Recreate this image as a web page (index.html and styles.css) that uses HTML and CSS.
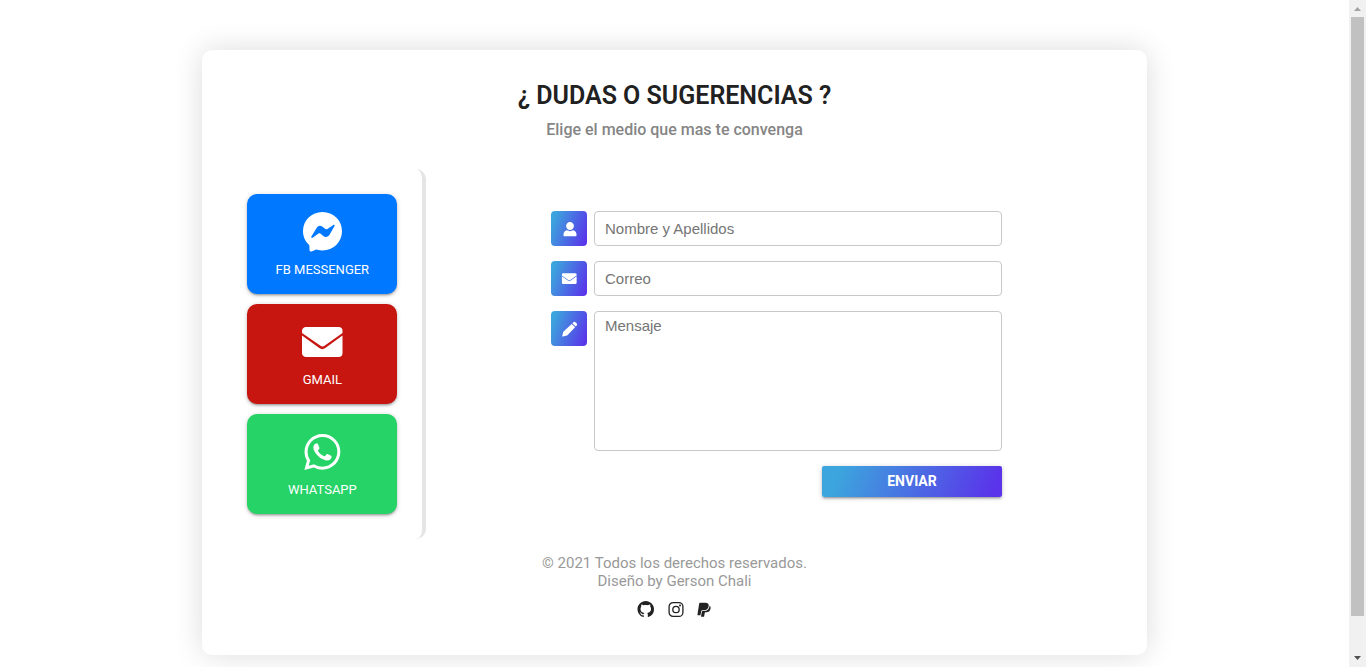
FILE: index.html
```html
<!DOCTYPE html>
<html lang="es">
<head>
<meta charset="utf-8">
<meta name="viewport" content="width=device-width, initial-scale=1">
<title>Dudas o sugerencias</title>
<link rel="stylesheet" href="styles.css">
</head>
<body>
<div class="page">
  <main class="content">
    <section class="card">
      <header class="heading">
        <h1 class="title">¿ DUDAS O SUGERENCIAS ?</h1>
        <p class="subtitle">Elige el medio que mas te convenga</p>
      </header>
      <div class="columns">
        <nav class="channels">
          <a class="channel messenger" href="#messenger">
            <svg class="channel-icon" viewBox="-1 0 42 42" aria-hidden="true"><path fill="currentColor" fill-rule="evenodd" d="M20.500 1C9.600 1 1 9.300 1 20.200c0 5.600 2.400 10.200 5.700 13.300.5.500.7 1 .7 1.600l.1 4c0 1.100 1 1.800 2 1.400l4.200-1.800c.6-.2 1-.2 1.600 0 1.600.5 3.300.7 5.200.7C31.400 39.400 40 31.100 40 20.200S31.400 1 20.500 1zM9.400 25.600l4.900-8.200c1.500-2.600 3.700-3.500 6.200-1.700l2.900 2.200c.7.600 1.400.5 2 .1l5.900-4c.9-.6 1.700.1 1.200 1.100l-4.700 8.100c-1.600 2.800-4.200 3.500-6.500 1.700l-3-2.300c-.6-.4-1.200-.4-1.800 0l-5.900 4.100c-.9.600-1.700-.2-1.200-1.100z"/></svg>
            <span>FB MESSENGER</span>
          </a>
          <a class="channel gmail" href="#gmail">
            <svg class="channel-icon" viewBox="-0.500 0 42 42" aria-hidden="true"><path fill="currentColor" d="M5 6h32a4 4 0 0 1 4 4v2L23 24.700a3.500 3.500 0 0 1-4 0L.5 12V10A4 4 0 0 1 5 6zM.5 14.600 17.800 27a5 5 0 0 0 6 0L41 14.600V32a4 4 0 0 1-4 4H5a4 4 0 0 1-4.500-4z"/></svg>
            <span>GMAIL</span>
          </a>
          <a class="channel whatsapp" href="#whatsapp">
            <svg class="channel-icon" viewBox="-1.500 -1.300 18.600 18.600" aria-hidden="true"><path fill="currentColor" d="M13.601 2.326A7.854 7.854 0 0 0 7.994 0C3.627 0 .068 3.558.064 7.926c0 1.399.366 2.760 1.057 3.965L0 16l4.204-1.102a7.933 7.933 0 0 0 3.790.965h.004c4.368 0 7.926-3.558 7.930-7.930A7.898 7.898 0 0 0 13.600 2.326zM7.994 14.521a6.573 6.573 0 0 1-3.356-.920l-.240-.144-2.494.654.666-2.433-.156-.251a6.560 6.560 0 0 1-1.007-3.505c0-3.626 2.957-6.584 6.591-6.584a6.560 6.560 0 0 1 4.660 1.931 6.557 6.557 0 0 1 1.928 4.660c-.004 3.639-2.961 6.592-6.592 6.592zm3.615-4.934c-.197-.099-1.170-.578-1.353-.646-.182-.065-.315-.099-.445.099-.133.197-.513.646-.627.775-.114.133-.232.148-.430.050-.197-.100-.836-.308-1.592-.985-.590-.525-.985-1.175-1.103-1.372-.114-.198-.011-.304.088-.403.087-.088.197-.232.296-.346.100-.114.133-.198.198-.330.065-.134.034-.248-.015-.347-.050-.099-.445-1.076-.612-1.470-.160-.389-.323-.335-.445-.340-.114-.007-.247-.007-.380-.007a.729.729 0 0 0-.529.247c-.182.198-.691.677-.691 1.654 0 .977.710 1.916.810 2.049.098.133 1.394 2.132 3.383 2.992.470.205.840.326 1.129.418.475.152.904.129 1.246.080.380-.058 1.171-.480 1.338-.943.164-.464.164-.860.114-.943-.049-.084-.182-.133-.380-.232z"/></svg>
            <span>WHATSAPP</span>
          </a>
        </nav>
        <div class="form-area">
          <form class="form">
            <div class="field">
              <label class="field-icon" for="nombre" aria-label="Nombre y Apellidos">
                <svg viewBox="-1 0 16 16" aria-hidden="true"><path fill="currentColor" d="M8 1a3.900 3.900 0 0 1 3.900 4C11.900 7 10.200 9 8 9S4.100 7 4.100 5A3.900 3.900 0 0 1 8 1zM5 9.300c1.800 1.100 4.200 1.100 6 0 2.200.5 3.500 2.100 3.500 4.200v.8c0 .6-.4 1-1 1h-11c-.6 0-1-.4-1-1v-.8c0-2.100 1.300-3.700 3.500-4.200z"/></svg>
              </label>
              <input class="control" id="nombre" type="text" placeholder="Nombre y Apellidos">
            </div>
            <div class="field">
              <label class="field-icon" for="correo" aria-label="Correo">
                <svg viewBox="-2 0 44 44" aria-hidden="true"><path fill="currentColor" d="M5 6h32a4 4 0 0 1 4 4v2.200L22.500 25.300a3 3 0 0 1-3.500 0L.5 12.200V10A4 4 0 0 1 5 6zM.5 14.600 17.800 27a5 5 0 0 0 6 0L41 14.600V32a4 4 0 0 1-4 4H5a4 4 0 0 1-4.500-4z"/></svg>
              </label>
              <input class="control" id="correo" type="email" placeholder="Correo">
            </div>
            <div class="field">
              <label class="field-icon" for="mensaje" aria-label="Mensaje">
                <svg viewBox="-1 0 16 16" aria-hidden="true"><path fill="currentColor" d="M11.200 1.400a1.800 1.800 0 0 1 2.500 0l.8.800a1.800 1.800 0 0 1 0 2.500l-.8.900-3.400-3.400zM9.700 2.900l3.400 3.400-7.700 7.900c-.2.200-.4.300-.6.400L1 15.500c-.5.100-.8-.2-.7-.7l.9-3.700c.1-.2.200-.4.400-.6z"/></svg>
              </label>
              <textarea class="control message" id="mensaje" placeholder="Mensaje"></textarea>
            </div>
            <button class="submit" type="submit">ENVIAR</button>
          </form>
        </div>
      </div>
      <footer class="footer">
        <p class="legal">© 2021 Todos los derechos reservados.<br>Diseño by Gerson Chali</p>
        <div class="social">
          <a href="#github" aria-label="GitHub"><svg viewBox="-0.500 0 16.500 16.500" aria-hidden="true"><path fill="currentColor" d="M8 0C3.580 0 0 3.580 0 8c0 3.540 2.290 6.530 5.470 7.590.400.070.550-.170.550-.380 0-.190-.010-.820-.010-1.490-2.010.370-2.530-.490-2.690-.940-.090-.230-.480-.940-.820-1.130-.280-.150-.680-.520-.010-.530.630-.010 1.080.580 1.230.820.720 1.210 1.870.870 2.330.660.070-.520.280-.870.510-1.070-1.780-.200-3.640-.890-3.640-3.950 0-.870.310-1.590.820-2.150-.080-.200-.360-1.020.080-2.120 0 0 .670-.210 2.200.820.640-.180 1.320-.270 2-.270s1.360.090 2 .270c1.530-1.040 2.200-.820 2.200-.820.440 1.100.160 1.920.080 2.120.510.560.820 1.270.820 2.150 0 3.070-1.870 3.750-3.650 3.950.290.250.540.730.540 1.480 0 1.070-.010 1.930-.010 2.200 0 .210.150.460.550.380A8.010 8.010 0 0 0 16 8c0-4.420-3.580-8-8-8z"/></svg></a>
          <a href="#instagram" aria-label="Instagram"><svg viewBox="-0.500 0 17 17" aria-hidden="true"><g fill="none" stroke="currentColor" stroke-width="1.300"><rect x="1.600" y="1.600" width="13.800" height="13.800" rx="4"/><circle cx="8.500" cy="8.500" r="3.200"/></g><circle cx="12.500" cy="4.500" r="1" fill="currentColor"/></svg></a>
          <a class="paypal" href="#paypal" aria-label="PayPal"><svg viewBox="1 0 15 17" aria-hidden="true"><path fill="currentColor" d="M4.200 1.200h5.600c2.800 0 4.200 1.400 3.700 3.900-.5 2.800-2.300 4.200-5.200 4.200H6.500c-.6 0-.9.300-1 .8l-.8 4.500H2c-.4 0-.6-.2-.5-.6L3.400 1.900c.1-.4.4-.7.8-.7z"/><path fill="currentColor" d="M14.500 4.500c1 .8 1.300 1.900 1 3.200-.5 2.600-2.100 3.700-4.600 3.700h-.8c-.5 0-.7.200-.8.700l-.6 3.600c-.1.400-.3.600-.7.600H5.700c-.3 0-.5-.2-.4-.5l.9-5c.1-.4.300-.6.700-.6h1.500c3.600 0 5.800-1.800 6.100-5.700z"/></svg></a>
        </div>
      </footer>
    </section>
  </main>
  <div class="scrollbar" aria-hidden="true">
    <svg class="arrow up" viewBox="0 0 17 17"><path fill="currentColor" d="M5 11 8.500 7 12 11z"/></svg>
    <div class="track"><div class="thumb"></div></div>
    <svg class="arrow" viewBox="0 0 17 17"><path fill="currentColor" d="M5 6h7L8.500 10z"/></svg>
  </div>
</div>
</body>
</html>
```

FILE: styles.css
```css
* {
  box-sizing: border-box;
}

html {
  scrollbar-width: none;
}

body {
  margin: 0;
  background: #fff;
  color: #212121;
  font-family: Roboto, "Liberation Sans", sans-serif;
}

h1,
p {
  margin: 0;
}

.page {
  display: flex;
  height: 100vh;
  overflow: hidden;
}

.content {
  flex: 1;
  min-width: 0;
  padding: 50px 0;
}

.card {
  width: 70%;
  margin: 0 auto;
  padding: 31px 20px 37px;
  border-radius: 10px;
  background: #fff;
  box-shadow: 0 0 30px rgba(0, 0, 0, 0.14);
}

.heading {
  padding-bottom: 29px;
  text-align: center;
}

.title {
  font-size: 25px;
  font-weight: 600;
  line-height: 30px;
}

.subtitle {
  padding-top: 9px;
  color: #858585;
  font-size: 16px;
  font-weight: 500;
  line-height: 20px;
}

.columns {
  display: flex;
}

.channels {
  display: flex;
  flex-direction: column;
  gap: 10px;
  padding: 25px;
  border-right: 4px solid #e5e5e5;
  border-radius: 10px;
}

.channel {
  display: flex;
  flex-direction: column;
  align-items: center;
  gap: 9px;
  width: 150px;
  height: 100px;
  padding-top: 17px;
  border-radius: 10px;
  color: #fff;
  font-size: 13px;
  line-height: 16px;
  text-decoration: none;
  box-shadow: 0 2px 2px rgba(0, 0, 0, 0.14), 0 3px 1px -2px rgba(0, 0, 0, 0.12), 0 1px 5px rgba(0, 0, 0, 0.2);
}

.channel-icon {
  width: 42px;
  height: 42px;
}

.messenger {
  background: #0078ff;
}

.gmail {
  background: #c71610;
}

.whatsapp {
  background: #25d366;
}

.form-area {
  display: flex;
  flex: 1;
  align-items: center;
  justify-content: center;
}

.form {
  display: flex;
  flex: 0 1 451px;
  flex-direction: column;
  gap: 15px;
}

.field {
  display: flex;
  align-items: flex-start;
  gap: 7px;
}

.field-icon,
.submit {
  background: linear-gradient(110deg, #3ca5dd 10%, #5a33ea 95%);
  color: #fff;
}

.field-icon {
  display: flex;
  flex: none;
  align-items: center;
  justify-content: center;
  width: 36px;
  height: 35px;
  border-radius: 4px;
}

.field-icon svg {
  width: 16px;
  height: 16px;
}

.control {
  flex: 1;
  min-width: 0;
  height: 35px;
  padding: 0 10px;
  border: 1px solid #c8c8c8;
  border-radius: 4px;
  background: #fff;
  color: #212121;
  font-family: "Liberation Sans", Arial, sans-serif;
  font-size: 15px;
}

.control::placeholder {
  color: #757575;
}

.message {
  height: 140px;
  padding: 5px 10px;
  line-height: 18px;
  resize: none;
}

.submit {
  align-self: flex-end;
  width: 180px;
  height: 31px;
  padding: 0 0 2px;
  border: 0;
  border-radius: 2px;
  font-family: inherit;
  font-size: 14px;
  font-weight: 700;
  box-shadow: 0 2px 2px rgba(0, 0, 0, 0.14), 0 3px 1px -2px rgba(0, 0, 0, 0.12), 0 1px 5px rgba(0, 0, 0, 0.2);
}

.footer {
  padding-top: 15px;
  text-align: center;
}

.legal {
  color: #999;
  font-size: 15px;
  font-weight: 400;
  line-height: 18px;
}

.social {
  display: flex;
  justify-content: center;
  gap: 13px;
  padding-top: 11px;
}

.social a {
  display: flex;
  color: inherit;
}

.social svg {
  width: 17px;
  height: 17px;
}

.social .paypal svg {
  width: 14px;
}

.scrollbar {
  display: flex;
  flex: 0 0 17px;
  flex-direction: column;
  background: #f1f1f1;
}

.arrow {
  width: 17px;
  height: 17px;
  color: #505050;
}

.arrow.up {
  color: #a3a3a3;
}

.track {
  flex: 1;
  padding: 0 2px;
}

.thumb {
  height: 94.6%;
  background: #c1c1c1;
}
```
